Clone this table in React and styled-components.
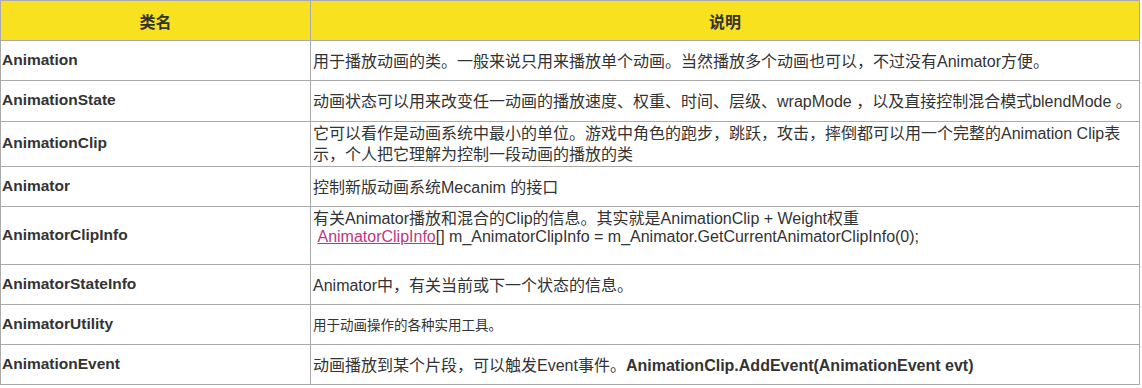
import React from 'react';
import styled, { createGlobalStyle } from 'styled-components';

const GlobalStyle = createGlobalStyle`
  body {
    margin: 0;
    background: #fff;
    font-family: "Liberation Sans", Arial, "Noto Sans CJK SC", sans-serif;
    color: #333;
  }
`;

const rows = [
  {
    name: 'Animation',
    h: 39,
    desc: '用于播放动画的类。一般来说只用来播放单个动画。当然播放多个动画也可以，不过没有Animator方便。',
  },
  {
    name: 'AnimationState',
    h: 40,
    desc: '动画状态可以用来改变任一动画的播放速度、权重、时间、层级、wrapMode ，以及直接控制混合模式blendMode 。',
  },
  {
    name: 'AnimationClip',
    h: 44,
    desc: '它可以看作是动画系统中最小的单位。游戏中角色的跑步，跳跃，攻击，摔倒都可以用一个完整的Animation Clip表示，个人把它理解为控制一段动画的播放的类',
    tall: true,
  },
  { name: 'Animator', h: 39, desc: '控制新版动画系统Mecanim 的接口' },
  { name: 'AnimatorClipInfo', h: 57, clipInfo: true },
  { name: 'AnimatorStateInfo', h: 39, desc: 'Animator中，有关当前或下一个状态的信息。' },
  { name: 'AnimatorUtility', h: 39, desc: '用于动画操作的各种实用工具。', small: true },
  { name: 'AnimationEvent', h: 39, event: true },
];

const App = () => {
  return (
    <>
      <GlobalStyle />
      <Table>
        <colgroup>
          <col style={{ width: 310 }} />
          <col />
        </colgroup>
        <thead>
          <tr>
            <Th>类名</Th>
            <Th>说明</Th>
          </tr>
        </thead>
        <tbody>
          {rows.map((row) => (
            <Row key={row.name} h={row.h}>
              <NameCell>{row.name}</NameCell>
              <DescCell small={row.small} tall={row.tall}>
                {row.clipInfo && (
                  <ClipBlock>
                    有关Animator播放和混合的Clip的信息。其实就是AnimationClip + Weight权重
                    <br />
                    &nbsp;<CodeLink href="#">AnimatorClipInfo</CodeLink>[] m_AnimatorClipInfo =
                    m_Animator.GetCurrentAnimatorClipInfo(0);
                    <br />
                    &nbsp;
                  </ClipBlock>
                )}
                {row.event && (
                  <>
                    动画播放到某个片段，可以触发Event事件。
                    <Strong>AnimationClip.AddEvent(AnimationEvent evt)</Strong>
                  </>
                )}
                {row.desc}
              </DescCell>
            </Row>
          ))}
        </tbody>
      </Table>
    </>
  );
};

export default App;

const Table = styled.table`
  width: 1140px;
  border-collapse: collapse;
  table-layout: fixed;
  border: 1px solid #aaa;
`;

const Row = styled.tr`
  height: ${(p) => p.h + 1}px;
`;

const Th = styled.th`
  height: 39px;
  padding: 0 3px;
  background: #f8e21f;
  border: 1px solid #aaa;
  color: #333;
  font-size: 16px;
  font-weight: bold;
  font-family: "Noto Sans CJK SC", sans-serif;
  text-align: center;
  vertical-align: middle;
`;

const NameCell = styled.td`
  padding: 0 2px 2px 1px;
  border: 1px solid #aaa;
  font-size: 15.5px;
  font-weight: bold;
  line-height: 18px;
  color: #333;
  vertical-align: middle;
`;

const DescCell = styled.td`
  padding: ${(p) => (p.tall ? '0 2px' : '2px 2px 0')};
  border: 1px solid #aaa;
  font-size: ${(p) => (p.small ? '13.5px' : '16px')};
  line-height: ${(p) => (p.tall ? '21px' : '18px')};
  font-family: "Liberation Sans", Arial, "Noto Sans CJK SC", sans-serif;
  color: #333;
  vertical-align: middle;
`;

const ClipBlock = styled.div`
  line-height: 18px;
`;

const CodeLink = styled.a`
  color: #c1367f;
  text-decoration: underline;
`;

const Strong = styled.strong`
  font-weight: bold;
`;
